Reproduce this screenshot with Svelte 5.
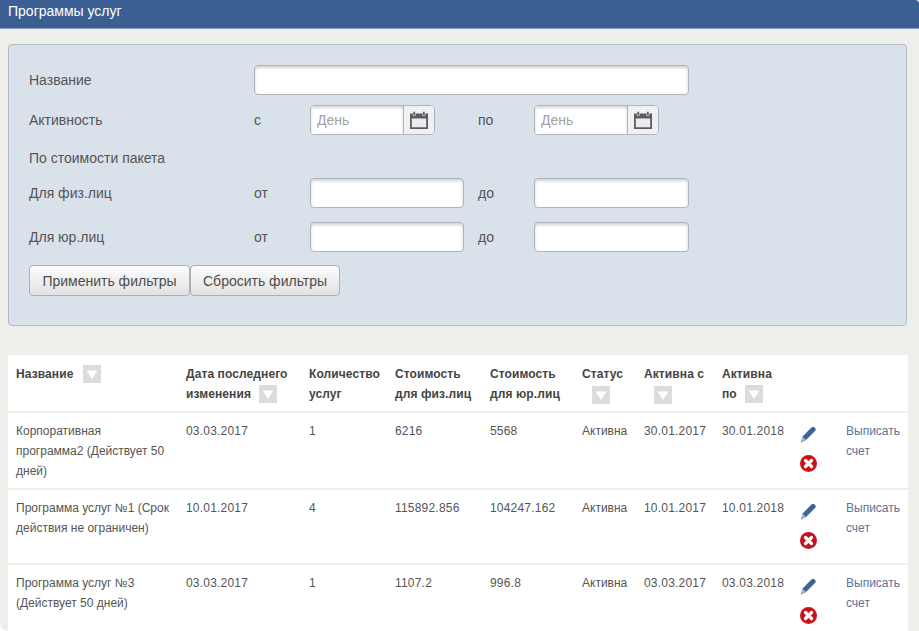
<script>
  const rows = [
    { name: 'Корпоративная программа2 (Действует 50 дней)', changed: '03.03.2017', count: '1', fiz: '6216', yur: '5568', status: 'Активна', from: '30.01.2017', to: '30.01.2018', cls: 'r1' },
    { name: 'Программа услуг №1 (Срок действия не ограничен)', changed: '10.01.2017', count: '4', fiz: '115892.856', yur: '104247.162', status: 'Активна', from: '10.01.2017', to: '10.01.2018', cls: 'r2' },
    { name: 'Программа услуг №3 (Действует 50 дней)', changed: '03.03.2017', count: '1', fiz: '1107.2', yur: '996.8', status: 'Активна', from: '03.03.2017', to: '03.03.2018', cls: 'r3' }
  ];
</script>

{#snippet sort()}
  <span class="sort"><svg width="18" height="18" viewBox="0 0 18 18"><path d="M3.5 5.5h11L9 14z" fill="#fff" /></svg></span>
{/snippet}

{#snippet cal()}
  <span class="addon">
    <svg width="18" height="18" viewBox="0 0 18 18">
      <path d="M0 2.5h18V18H0z" fill="#5c5b59" />
      <path d="M1.8 7.6h14.4v8.6H1.8z" fill="#e9edf2" />
      <path d="M3 .5h2.4v4H3zM12.6 .5H15v4h-2.4z" fill="#5c5b59" stroke="#eef0f2" stroke-width=".6" />
    </svg>
  </span>
{/snippet}

<div class="page">
  <header class="bar">Программы услуг</header>

  <section class="filters">
    <div class="row">
      <span class="lbl">Название</span>
      <input class="in wide" type="text" />
    </div>
    <div class="row r-act">
      <span class="lbl">Активность</span>
      <span class="pre">с</span>
      <div class="date"><input class="in-date" type="text" placeholder="День" />{@render cal()}</div>
      <span class="pre2">по</span>
      <div class="date"><input class="in-date" type="text" placeholder="День" />{@render cal()}</div>
    </div>
    <div class="cost">По стоимости пакета</div>
    <div class="row r-fiz">
      <span class="lbl">Для физ.лиц</span>
      <span class="pre">от</span>
      <input class="in num" type="text" />
      <span class="pre2">до</span>
      <input class="in num last" type="text" />
    </div>
    <div class="row r-yur">
      <span class="lbl">Для юр.лиц</span>
      <span class="pre">от</span>
      <input class="in num" type="text" />
      <span class="pre2">до</span>
      <input class="in num last" type="text" />
    </div>
    <div class="btns">
      <button type="button" class="b1">Применить фильтры</button>
      <button type="button">Сбросить фильтры</button>
    </div>
  </section>

  <table>
    <colgroup>
      <col style="width:170px" /><col style="width:123px" /><col style="width:86px" /><col style="width:95px" /><col style="width:92px" /><col style="width:62px" /><col style="width:78px" /><col style="width:78px" /><col style="width:46px" /><col style="width:70px" />
    </colgroup>
    <thead>
      <tr>
        <th class="first">Название <span class="gap"></span>{@render sort()}</th>
        <th>Дата последнего изменения <span class="gap"></span>{@render sort()}</th>
        <th>Количество услуг</th>
        <th>Стоимость для физ.лиц</th>
        <th>Стоимость для юр.лиц</th>
        <th class="ind">Статус {@render sort()}</th>
        <th class="ind">Активна с {@render sort()}</th>
        <th>Активна<br />по <span class="gap"></span>{@render sort()}</th>
        <th></th>
        <th></th>
      </tr>
    </thead>
    <tbody>
      {#each rows as r}
        <tr class={r.cls}>
          <td class="title">{r.name}</td>
          <td class="n">{r.changed}</td>
          <td class="n">{r.count}</td>
          <td class="n">{r.fiz}</td>
          <td class="n">{r.yur}</td>
          <td>{r.status}</td>
          <td class="n">{r.from}</td>
          <td class="n">{r.to}</td>
          <td class="acts">
            <svg class="pen" width="16" height="17" viewBox="0 0 16 17"><path d="M11.4 1.6Q13 .2 14.3 1.2L15.4 2.4Q16.4 3.6 15 5L6 14 1 16.5 2.6 10.4z" fill="#3f6499" /><path d="M2.6 10.6L5.9 14 1 16.5z" fill="#a3b6cf" /></svg>
            <svg class="del" width="17" height="17" viewBox="0 0 17 17"><circle cx="8.5" cy="8.5" r="8.5" fill="#c4151c" /><path d="M5.5 5.5l6 6M11.5 5.5l-6 6" stroke="#fff" stroke-width="3.2" stroke-linecap="round" /></svg>
          </td>
          <td><span class="link">Выписать счет</span></td>
        </tr>
      {/each}
    </tbody>
  </table>
</div>

<style>
  :global(body) {
    margin: 0;
    background: #fff;
  }
  .page {
    height: 631px;
    overflow: hidden;
    background: #eeefeb;
    border-radius: 0 4px 0 8px;
    font-family: "Liberation Sans", Arial, sans-serif;
    color: #555;
  }
  .bar {
    height: 29px;
    box-sizing: border-box;
    padding: 2px 8px 0;
    background: #3b5f92;
    border-bottom: 1px solid #8fa3be;
    color: #fff;
    font-size: 14px;
    line-height: 18px;
  }
  .filters {
    box-sizing: border-box;
    height: 282px;
    margin: 15px 12px 29px 8px;
    padding: 20px 20px 0;
    background: #d9e1eb;
    border: 1px solid #b3bbc5;
    border-radius: 4px;
    font-size: 14px;
  }
  .row {
    display: flex;
    align-items: center;
  }
  .lbl {
    width: 225px;
    flex: none;
  }
  .pre {
    width: 56px;
    flex: none;
  }
  .pre2 {
    width: 56px;
    margin-left: 14px;
    flex: none;
  }
  .r-act .pre2 {
    margin-left: 43px;
  }
  .r-act { margin-top: 10px; }
  .cost { margin-top: 15px; line-height: 16px; }
  .r-fiz { margin-top: 12px; }
  .r-yur { margin-top: 14px; }
  .in {
    box-sizing: border-box;
    height: 30px;
    padding: 0 6px;
    background: #fff;
    border: 1px solid #aeb4bb;
    border-radius: 4px;
    box-shadow: inset 0 2px 3px rgba(0, 0, 0, 0.18);
    outline: none;
  }
  .wide { width: 435px; }
  .num { width: 154px; }
  .num.last { width: 155px; }
  .date {
    box-sizing: border-box;
    display: flex;
    width: 125px;
    height: 30px;
    background: #fff;
    border: 1px solid #aeb4bb;
    border-radius: 4px;
    overflow: hidden;
  }
  .in-date {
    box-sizing: border-box;
    width: 93px;
    height: 100%;
    padding: 0 0 0 6px;
    border: 0;
    border-right: 1px solid #aeb4bb;
    box-shadow: inset 0 2px 3px rgba(0, 0, 0, 0.16);
    outline: none;
    font: 14px "Liberation Sans", Arial, sans-serif;
  }
  .in-date::placeholder { color: #a3a3a3; opacity: 1; }
  .addon {
    flex: 1;
    display: flex;
    align-items: center;
    justify-content: center;
    background: #eef0f2;
  }
  .btns {
    display: flex;
    margin-top: 13px;
  }
  button {
    box-sizing: border-box;
    height: 31px;
    padding: 0 12px;
    border: 1px solid #aab0b8;
    border-radius: 4px;
    background: linear-gradient(#fdfdfd, #e2e2e2);
    color: #4d4d4d;
    font: 14px "Liberation Sans", Arial, sans-serif;
  }
  .b1 { width: 161px; padding: 0; }
  table {
    table-layout: fixed;
    width: 900px;
    margin-left: 8px;
    border-collapse: separate;
    border-spacing: 0;
    background: #fff;
    font-size: 12px;
    line-height: 20px;
  }
  th {
    height: 58px;
    box-sizing: border-box;
    padding: 9px 0 0 8px;
    text-align: left;
    vertical-align: top;
    font-weight: bold;
    color: #444;
    letter-spacing: 0.1px;
    border-bottom: 2px solid #eeefeb;
  }
  td {
    box-sizing: border-box;
    padding: 8px 6px 0 8px;
    vertical-align: top;
    border-bottom: 2px solid #eeefeb;
  }
  td.title { padding-right: 7px; }
  td.n { letter-spacing: 0.2px; padding-right: 0; }
  .r1 td { height: 77px; }
  .r2 td { height: 75px; }
  .r3 td { height: 75px; }
  .gap {
    display: inline-block;
    width: 5px;
  }
  .first .gap { width: 6px; }
  .sort {
    display: inline-block;
    width: 18px;
    height: 18px;
    background: #dcdcdc;
    vertical-align: top;
    margin-top: 1px;
  }
  .sort svg { display: block; }
  th.ind .sort { display: block; margin: 2px 0 0 10px; }
  td.acts { padding: 13px 0 0 8px; }
  .acts svg { display: block; }
  .del { margin-top: 12px; }
  .link { color: #5c7299; }
</style>
